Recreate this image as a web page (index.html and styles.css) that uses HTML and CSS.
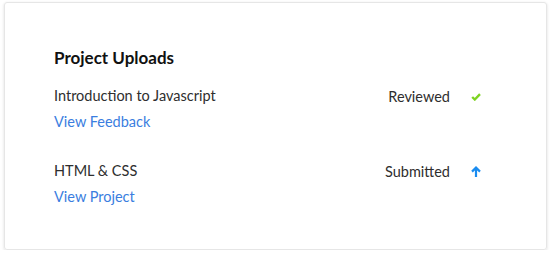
FILE: index.html
```html
<!DOCTYPE html>
<html>
<head>
<meta charset="utf-8">
<link rel="stylesheet" href="styles.css">
</head>
<body>
<div class="card">
  <h2 class="title">Project Uploads</h2>
  <ul class="list">
    <li class="item">
      <div class="info">
        <div class="name">Introduction to Javascript</div>
        <a class="link" href="#">View Feedback</a>
      </div>
      <div class="status">
        <span class="status-text">Reviewed</span>
        <span class="icon">
          <svg width="10" height="8" viewBox="0 0 10 8"><path d="M1.2 4 L3.8 6.5 L9 1.2" fill="none" stroke="#7ed321" stroke-width="2.4"/></svg>
        </span>
      </div>
    </li>
    <li class="item">
      <div class="info">
        <div class="name">HTML &amp; CSS</div>
        <a class="link" href="#">View Project</a>
      </div>
      <div class="status">
        <span class="status-text">Submitted</span>
        <span class="icon">
          <svg width="10" height="11" viewBox="0 0 10 11"><path d="M5 11 V1.8 M1 5.6 L5 1.6 L9 5.6" fill="none" stroke="#1a8cf0" stroke-width="2.2"/></svg>
        </span>
      </div>
    </li>
  </ul>
</div>
</body>
</html>
```

FILE: styles.css
```css
html, body {
  margin: 0;
  padding: 0;
  background: #fff;
}
body {
  padding: 2px 5px 0 4px;
  font-family: Lato, "Open Sans", sans-serif;
  color: #2e2e2e;
}
.card {
  height: 248px;
  box-sizing: border-box;
  border: 1px solid #e6e6e6;
  border-radius: 3px;
  box-shadow: 0 1px 3px rgba(0,0,0,0.14);
  padding: 44px 65px 0 49px;
}
.title {
  margin: 0 0 17px;
  font-size: 17px;
  line-height: 22px;
  font-weight: 700;
  color: #111;
}
.list {
  list-style: none;
  margin: 0;
  padding: 0;
}
.item {
  display: flex;
  justify-content: space-between;
  align-items: flex-start;
  margin-bottom: 29px;
}
.info {
  display: flex;
  flex-direction: column;
  gap: 6px;
}
.name, .link, .status-text {
  font-size: 14.5px;
  line-height: 20px;
}
.status-text {
  margin-top: 1px;
}
.link {
  color: #3a7ee0;
  text-decoration: none;
}
.status {
  display: flex;
  align-items: center;
  gap: 21px;
}
.icon {
  display: flex;
  width: 10px;
  justify-content: center;
}
```
